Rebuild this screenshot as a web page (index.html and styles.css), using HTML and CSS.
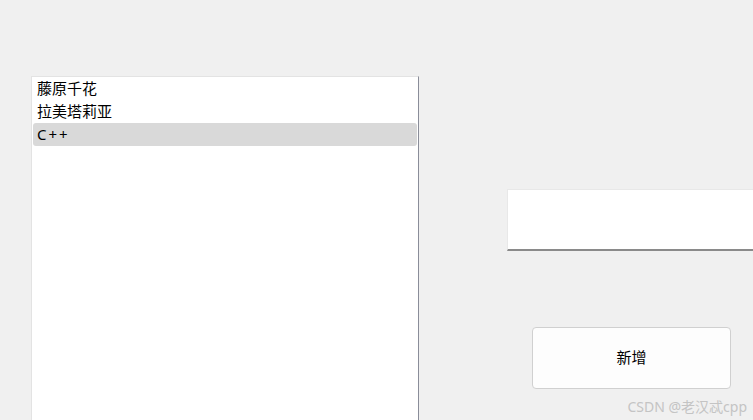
FILE: index.html
```html
<!DOCTYPE html>
<html lang="zh-CN">
<head>
  <meta charset="UTF-8" />
  <title>列表</title>
  <link rel="stylesheet" href="styles.css">
</head>
<body>
  <div class="window">
    <!-- left: list widget -->
    <div class="list-panel">
      <div class="list-item">藤原千花</div>
      <div class="list-item">拉美塔莉亚</div>
      <div class="list-item selected"><span class="latin">C++</span></div>
    </div>

    <!-- right: line edit + add button -->
    <div class="side">
      <div class="line-edit"></div>
      <button class="add-btn">新增</button>
    </div>

    <div class="watermark">CSDN @老汉忒cpp</div>
  </div>
</body>
</html>
```

FILE: styles.css
```css
:root {
  --bg: #f0f0f0;
  --white: #ffffff;
  --text: #000000;
  --light-border: #e3e3e3;
  --dark-border: #8a8d99;
  --selected: #d9d9d9;
}

body {
  margin: 0;
  padding: 0;
  background-color: var(--bg);
  font-family: "Noto Sans", "Noto Sans CJK SC", sans-serif;
  color: var(--text);
}

.window {
  position: relative;
  display: flex;
  height: 420px;
  overflow: hidden;
}

.list-panel {
  flex: none;
  box-sizing: border-box;
  width: 388px;
  margin-left: 31px;
  margin-top: 76px;
  padding-left: 1px;
  padding-right: 1px;
  background-color: var(--white);
  border-top: 1px solid var(--light-border);
  border-left: 1px solid var(--light-border);
  border-right: 1px solid var(--dark-border);
}

.list-item {
  height: 23px;
  line-height: 23px;
  padding-left: 4px;
  font-size: 15px;
  border-radius: 3px;
}

.list-item.selected {
  background-color: var(--selected);
}

.latin {
  letter-spacing: 2px;
}

.side {
  flex: 1;
  display: flex;
  flex-direction: column;
  align-items: flex-start;
  padding-top: 189px;
  margin-left: 88px;
}

.line-edit {
  box-sizing: border-box;
  width: 260px;
  height: 62px;
  background-color: var(--white);
  border-top: 1px solid #e8e8e8;
  border-left: 1px solid #e8e8e8;
  border-bottom: 2px solid #8a8a8a;
}

.add-btn {
  box-sizing: border-box;
  width: 199px;
  height: 62px;
  margin-top: 76px;
  margin-left: 25px;
  padding: 0 0 3px;
  background-color: #fdfdfd;
  border: 1px solid #d0d0d0;
  border-radius: 4px;
  font-family: "Noto Sans", "Noto Sans CJK SC", sans-serif;
  font-size: 15px;
  color: var(--text);
}

.watermark {
  position: absolute;
  right: 6px;
  bottom: 4px;
  font-size: 14px;
  color: #c4c4c4;
}
```
